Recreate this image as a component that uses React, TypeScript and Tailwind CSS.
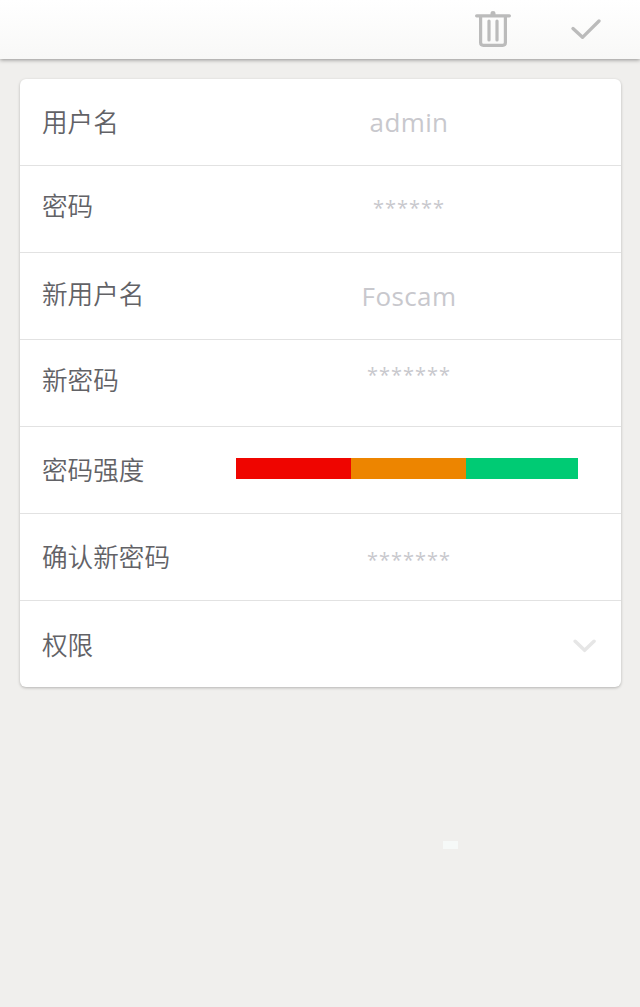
const rows = [
  { label: "用户名", value: "admin", l: "-translate-y-px", v: "text-[26px] tracking-[0.400px]" },
  { label: "密码", value: "******", l: "-translate-y-1", v: "text-[20px] tracking-[1px] -translate-y-px" },
  { label: "新用户名", value: "Foscam", l: "-translate-y-[3px]", v: "text-[26px] tracking-[0.400px]" },
  { label: "新密码", value: "*******", l: "-translate-y-1", v: "text-[20px] tracking-[1px] -translate-y-2" },
  { label: "密码强度", value: "", l: "-translate-y-px", v: "" },
  { label: "确认新密码", value: "*******", l: "-translate-y-px", v: "text-[20px] tracking-[1px] translate-y-[3px]" },
  { label: "权限", value: "", l: "", v: "" },
];

export default function App() {
  return (
    <div className="relative flex h-[1007px] w-[640px] flex-col bg-[#f0efed] font-['Open_Sans','Noto_Sans_CJK_SC',sans-serif]">
      <header className="flex h-[59px] shrink-0 justify-end bg-gradient-to-b from-white to-[#f8f8f7] shadow-[0_1px_4px_rgba(0,0,0,0.4)]">
        <svg className="mt-[10px] mr-[60px] h-[38px] w-9" viewBox="0 0 36 38" fill="none" stroke="#bbb" strokeWidth="3.200" strokeLinecap="round">
          <path d="M1.600 5.800H34.400M5.600 6V32.500Q5.600 35.300 8.400 35.300H27.600Q30.400 35.300 30.400 32.500V6M14 11V30M22 11V30" />
          <path d="M15.500 5V3Q15.500 1 18 1Q20.500 1 20.500 3V5Z" fill="#bbb" stroke="none" />
        </svg>
        <svg className="mt-[18px] mr-[39px] h-[23px] w-[30px]" viewBox="0 0 30 23" fill="none" stroke="#bbb" strokeWidth="3.300" strokeLinecap="round" strokeLinejoin="round">
          <path d="M2 10.500L11.500 19.300L28 3" />
        </svg>
      </header>
      <main className="mx-5 mt-5 w-[601px] rounded-md bg-white shadow-[0_1px_3px_rgba(0,0,0,0.25)]">
        {rows.map((row, i) => (
          <div key={row.label} className="flex h-[87px] items-center border-b border-[#e2e2e2] pl-[22px] last:h-[86px] last:border-b-0">
            <span className={`w-[194px] font-['Noto_Sans_CJK_SC',sans-serif] text-[25.600px] leading-9 font-[350] text-[#626266] ${row.l}`}>{row.label}</span>
            {i === 4 && (
              <div className="mb-[3px] flex h-[21px] w-[342px]">
                <div className="w-[115px] bg-[#ef0500]" />
                <div className="w-[115px] bg-[#ed8500]" />
                <div className="w-[112px] bg-[#00cb74]" />
              </div>
            )}
            {row.value && (
              <span className={`w-[346px] text-center leading-9 text-[#c8c8cd] ${row.v}`}>{row.value}</span>
            )}
            {i === 6 && (
              <svg className="mt-1 ml-[337px] h-[14px] w-6" viewBox="0 0 24 14" fill="none" stroke="#e6e6e6" strokeWidth="3.500" strokeLinecap="round" strokeLinejoin="round">
                <path d="M2.200 2.300L11.600 11.300L21 2.300" />
              </svg>
            )}
          </div>
        ))}
      </main>
      <div className="absolute top-[841px] left-[443px] h-2 w-[15px] bg-[#f6f9f8]" />
    </div>
  );
}
